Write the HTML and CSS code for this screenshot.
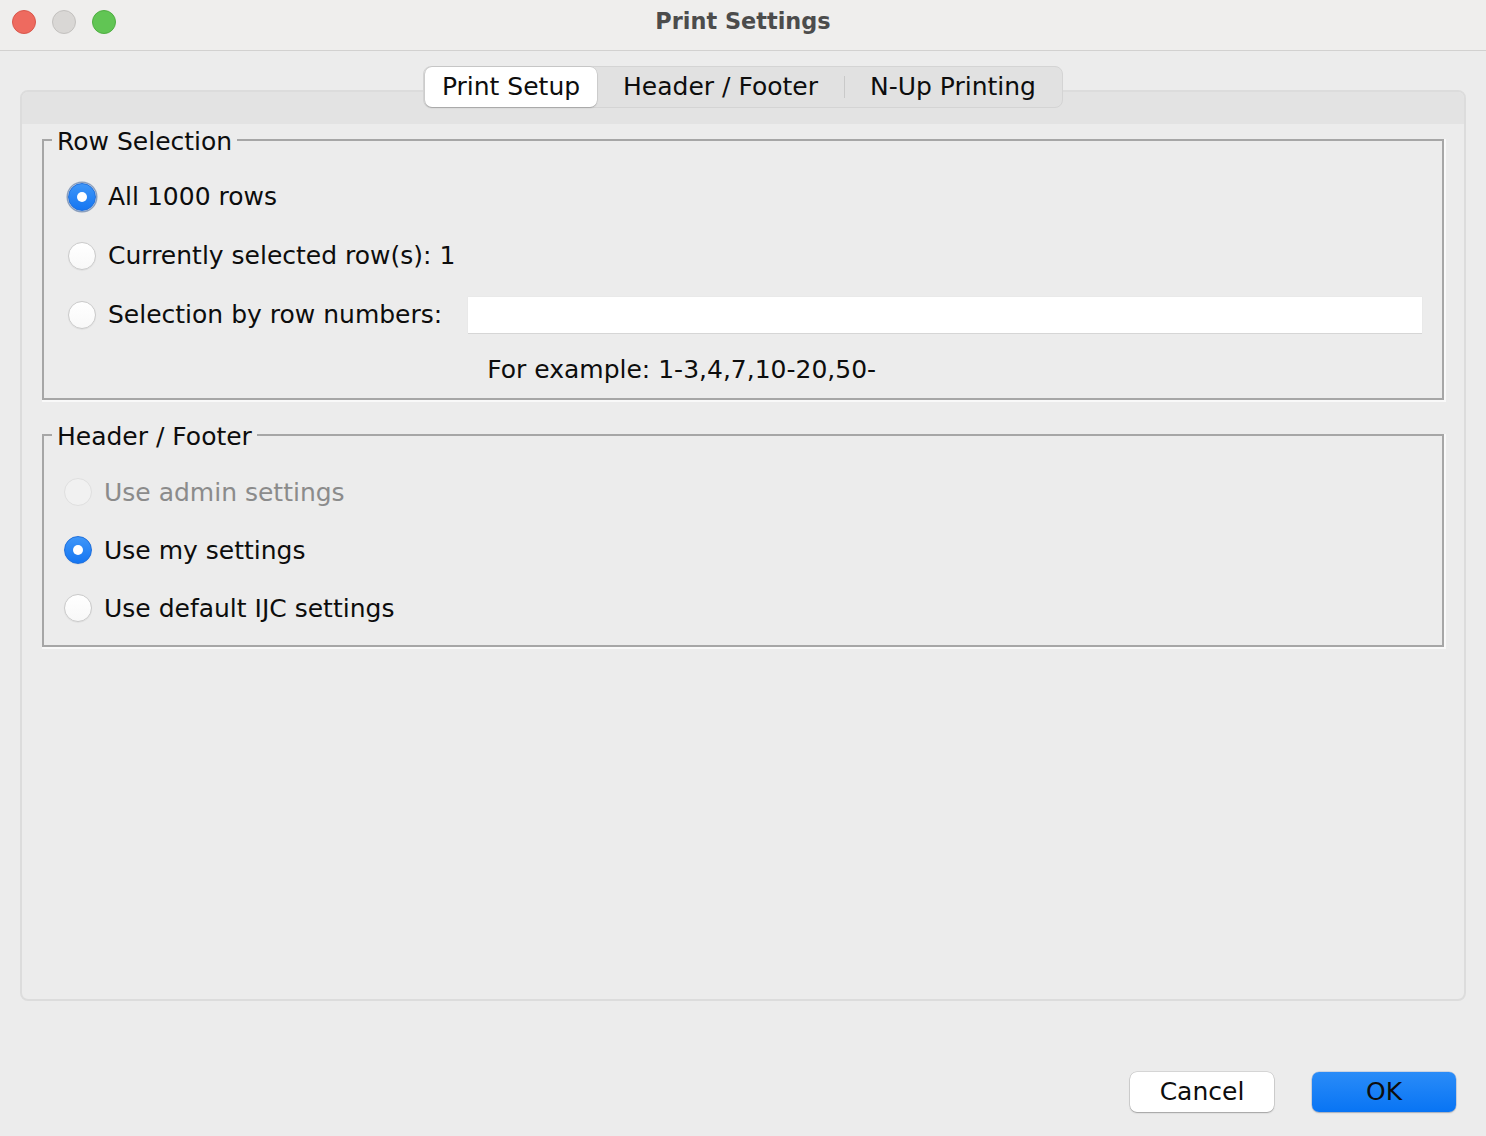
FILE: index.html
```html
<!DOCTYPE html>
<html lang="en">
<head>
<meta charset="utf-8">
<title>Print Settings</title>
<link rel="stylesheet" href="styles.css">
</head>
<body>
<div class="window">
  <header class="titlebar">
    <div class="lights">
      <span class="light red"></span>
      <span class="light gray"></span>
      <span class="light green"></span>
    </div>
    <div class="title">Print Settings</div>
    <div class="spacer"></div>
  </header>

  <main class="content">
    <div class="tabs-row">
      <div class="tabs">
        <div class="tab active">Print Setup</div>
        <div class="tab tab-header">Header / Footer</div>
        <span class="tab-sep"></span>
        <div class="tab tab-nup">N-Up Printing</div>
      </div>
    </div>

    <section class="pane">
      <div class="pane-band"></div>

      <fieldset class="group group-rows">
        <legend><span class="legend-text">Row Selection</span></legend>
        <div class="rows-grid">
          <label class="opt span2"><span class="radio on focus"></span><span>All 1000 rows</span></label>
          <label class="opt span2"><span class="radio"></span><span>Currently selected row(s): 1</span></label>
          <label class="opt"><span class="radio"></span><span>Selection by row numbers:</span></label>
          <div class="field-cell"><input class="textfield" type="text" value=""></div>
          <div class="example">For example: 1-3,4,7,10-20,50-</div>
        </div>
      </fieldset>

      <fieldset class="group group-hf">
        <legend><span class="legend-text">Header / Footer</span></legend>
        <div class="hf-list">
          <label class="opt disabled"><span class="radio dis"></span><span>Use admin settings</span></label>
          <label class="opt"><span class="radio on"></span><span>Use my settings</span></label>
          <label class="opt"><span class="radio"></span><span>Use default IJC settings</span></label>
        </div>
      </fieldset>
    </section>

    <footer class="buttons">
      <button class="btn cancel" type="button">Cancel</button>
      <button class="btn ok" type="button">OK</button>
    </footer>
  </main>
</div>
</body>
</html>
```

FILE: styles.css
```css
* { box-sizing: border-box; }

html, body {
  margin: 0;
  padding: 0;
}

body {
  width: 1486px;
  height: 1136px;
  overflow: hidden;
  background: #ececec;
  font-family: "DejaVu Sans", "Liberation Sans", sans-serif;
  font-size: 25px;
  color: #0d0d0d;
}

.window {
  width: 1486px;
  height: 1136px;
  display: flex;
  flex-direction: column;
}

/* ---------- title bar ---------- */
.titlebar {
  height: 51px;
  flex: none;
  background: #efeeed;
  border-bottom: 1px solid #d2d1d0;
  display: grid;
  grid-template-columns: 1fr auto 1fr;
  align-items: start;
}

.lights {
  display: flex;
  gap: 16px;
  padding: 10px 0 0 12px;
}

.light {
  width: 24px;
  height: 24px;
  border-radius: 50%;
  display: block;
}
.light.red { background: #ee6a5f; border: 1px solid #d9574c; }
.light.gray { background: #d9d7d5; border: 1px solid #c3c1bf; }
.light.green { background: #61c554; border: 1px solid #4fae42; }

.title {
  padding-top: 7px;
  font-size: 22.4px;
  font-weight: bold;
  color: #4c4c4c;
  line-height: 28px;
}

/* ---------- content ---------- */
.content {
  flex: 1;
  display: flex;
  flex-direction: column;
}

.tabs-row {
  display: flex;
  justify-content: center;
  margin-top: 15px;
  margin-bottom: -18px;
  position: relative;
  z-index: 2;
}

.tabs {
  display: flex;
  align-items: center;
  height: 42px;
  padding: 0 1px;
  background: #e1e1e1;
  border: 1px solid #d4d4d4;
  border-radius: 8px;
}

.tab {
  height: 40px;
  line-height: 40px;
  text-align: center;
  white-space: nowrap;
}

.tab.active {
  width: 172px;
  background: #fff;
  border-radius: 7px;
  box-shadow: 0 0 0 0.5px rgba(0,0,0,0.12), 0 1px 1.5px rgba(0,0,0,0.18);
}

.tab-header { width: 247px; }
.tab-nup { width: 216px; }

.tab-sep {
  width: 1px;
  height: 22px;
  background: #c9c9c9;
}

.pane {
  margin: 0 20px;
  height: 911px;
  flex: none;
  background: #ececec;
  border: 2px solid #dcdcdc;
  border-radius: 8px;
  overflow: hidden;
  position: relative;
  z-index: 1;
}

.pane-band {
  height: 32px;
  background: #e3e3e3;
}

/* ---------- groups ---------- */
.group {
  margin: 1px 20px 0 20px;
  padding: 12px 20px 2px 8px;
  border: 2px solid #a6a6a6;
  box-shadow: 1px 1px 0 1px #f9f9f9;
  min-width: 0;
}

.group legend {
  padding: 0 5px;
  line-height: 30px;
  font-size: 25px;
}

.legend-text {
  position: relative;
  top: 2px;
}

.group-hf {
  margin-top: 20px;
  padding: 13px 20px 8px 8px;
}

.rows-grid {
  display: grid;
  grid-template-columns: auto 1fr;
  grid-template-rows: 59px 59px 59px 52px;
  padding-left: 16px;
}

.span2 { grid-column: 1 / span 2; }

.opt {
  display: flex;
  align-items: center;
  gap: 12px;
  white-space: nowrap;
}

.opt.disabled { color: #8b8b8b; }

.field-cell {
  display: flex;
  align-items: center;
  padding-left: 26px;
}

.textfield {
  width: 100%;
  height: 36px;
  border: none;
  outline: none;
  background: #fff;
  box-shadow: 0 1px 0 #d6d6d6, 0 0 0 0.5px #e6e6e6;
  font: inherit;
  padding: 0 8px;
}

.example {
  grid-column: 2;
  line-height: 52px;
  padding-left: 45px;
  white-space: nowrap;
}

.hf-list {
  display: flex;
  flex-direction: column;
  padding-left: 12px;
}

.hf-list .opt { height: 58px; }

/* ---------- radios ---------- */
.radio {
  width: 28px;
  height: 28px;
  flex: none;
  border-radius: 50%;
  background: linear-gradient(#ffffff, #f8f8f8);
  border: 1px solid #cacaca;
  box-shadow: 0 0.5px 1px rgba(0,0,0,0.08);
  position: relative;
}

.radio.dis {
  background: #f1f1f1;
  border-color: #dfdfdf;
  box-shadow: none;
}

.radio.on {
  background: linear-gradient(#3e96f8, #1576f2);
  border: 1px solid #1f6fdc;
}

.radio.on::after {
  content: "";
  position: absolute;
  width: 10px;
  height: 10px;
  left: 8px;
  top: 8px;
  border-radius: 50%;
  background: #fff;
}

.radio.on.focus {
  box-shadow: 0 0 0 1.5px rgba(74, 108, 160, 0.6);
}

/* ---------- buttons ---------- */
.buttons {
  display: flex;
  justify-content: flex-end;
  gap: 38px;
  padding: 0 30px 0 0;
  margin-top: 71px;
}

.btn {
  width: 144px;
  height: 40px;
  border: none;
  border-radius: 7px;
  font: inherit;
  font-size: 25px;
  color: #0d0d0d;
  padding: 0;
  line-height: 40px;
}

.btn.cancel {
  background: #fff;
  box-shadow: 0 0 0 0.5px rgba(0,0,0,0.18), 0 1px 1.5px rgba(0,0,0,0.25);
}

.btn.ok {
  background: linear-gradient(#2a8cf8, #0874f4);
  box-shadow: 0 0 0 0.5px rgba(0,60,160,0.25), 0 1px 1.5px rgba(0,0,0,0.2);
}
```
